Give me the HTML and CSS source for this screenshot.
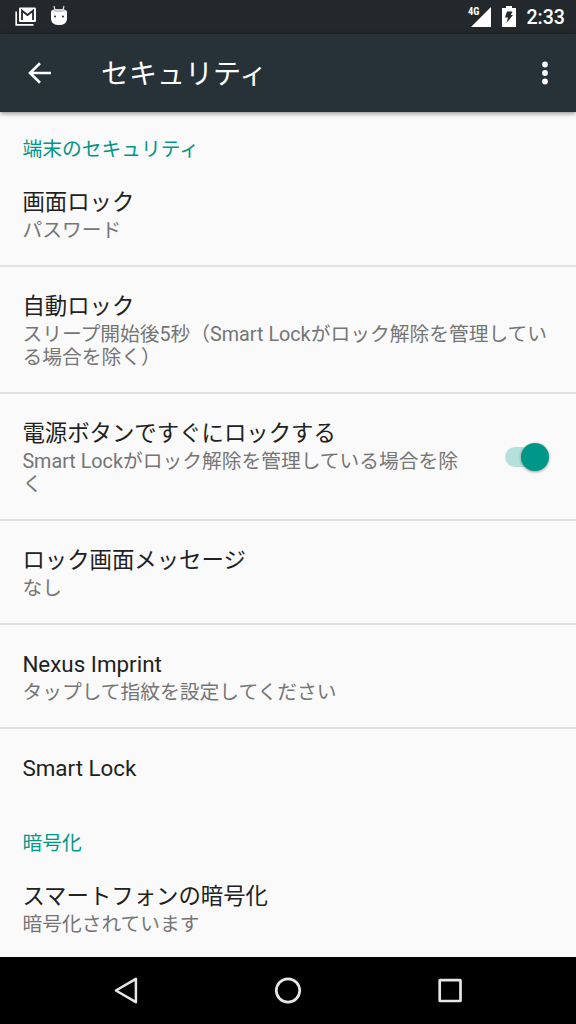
FILE: index.html
```html
<!DOCTYPE html>
<html lang="ja">
<head>
    <meta charset="UTF-8">
    <meta name="viewport" content="width=device-width, initial-scale=1.0">
    <title>セキュリティ</title>
    <link rel="stylesheet" href="styles.css">
</head>
<body>
    <div class="screen">
        <div class="status-bar">
            <svg class="icon-gmail" width="22" height="20" viewBox="0 0 22 20">
                <path d="M1.2 4.500V17.800H18.500" fill="none" stroke="#fff" stroke-width="1.7"/>
                <rect x="4" y="0.500" width="17" height="14.500" rx="1.2" fill="#fff"/>
                <path d="M7 13V3.700L12.500 8L18 3.700V13" fill="none" stroke="#22282b" stroke-width="1.8"/>
            </svg>
            <svg class="icon-android" width="18" height="21" viewBox="0 0 18 21">
                <path d="M4 1L5 5M14 1L13 5" stroke="#ddd" stroke-width="1.2"/>
                <path d="M1 7Q1 4 9 4T17 7V14Q16.500 20 9 20T1 14Z" fill="#fff"/>
                <path d="M2.500 6Q4 4 9 4T15.500 6Q9 8.500 2.500 6Z" fill="#ccc"/>
                <circle cx="5" cy="11.500" r="1" fill="#22282b"/>
                <circle cx="13" cy="11.500" r="1" fill="#22282b"/>
            </svg>
            <div class="status-right">
                <span class="network">4G</span>
                <svg class="icon-signal" width="20" height="20" viewBox="0 0 20 20">
                    <path d="M0 20L20 0V20Z" fill="#fff"/>
                </svg>
                <svg class="icon-battery" width="14" height="21" viewBox="0 0 14 21">
                    <path d="M4 0H10V2H14V21H0V2H4Z" fill="#fff"/>
                    <path d="M5 5.500H10.500L8.800 9H11L4.500 17L6 11.500H3Z" fill="#22282b"/>
                </svg>
                <span class="clock">2:33</span>
            </div>
        </div>

        <header class="toolbar">
            <svg class="icon-back" width="24" height="22" viewBox="0 0 24 22">
                <path d="M23 11H2M12 1.200L2 11L12 20.800" fill="none" stroke="#fff" stroke-width="2.6"/>
            </svg>
            <h1 class="toolbar-title">セキュリティ</h1>
            <svg class="icon-more" width="6" height="24" viewBox="0 0 6 24">
                <circle cx="3" cy="3.500" r="2.900" fill="#fff"/>
                <circle cx="3" cy="12" r="2.900" fill="#fff"/>
                <circle cx="3" cy="20.500" r="2.900" fill="#fff"/>
            </svg>
        </header>

        <main class="content">
            <h2 class="category">端末のセキュリティ</h2>
            <div class="row">
                <div class="row-text">
                    <div class="title">画面ロック</div>
                    <div class="summary">パスワード</div>
                </div>
            </div>
            <div class="row divided">
                <div class="row-text">
                    <div class="title">自動ロック</div>
                    <div class="summary">スリープ開始後5秒（Smart Lockがロック解除を管理している場合を除く）</div>
                </div>
            </div>
            <div class="row divided">
                <div class="row-text">
                    <div class="title">電源ボタンですぐにロックする</div>
                    <div class="summary">Smart Lockがロック解除を管理している場合を除く</div>
                </div>
                <div class="switch"><div class="thumb"></div></div>
            </div>
            <div class="row divided">
                <div class="row-text">
                    <div class="title">ロック画面メッセージ</div>
                    <div class="summary">なし</div>
                </div>
            </div>
            <div class="row divided">
                <div class="row-text">
                    <div class="title">Nexus Imprint</div>
                    <div class="summary">タップして指紋を設定してください</div>
                </div>
            </div>
            <div class="row divided">
                <div class="row-text">
                    <div class="title">Smart Lock</div>
                </div>
            </div>
            <h2 class="category">暗号化</h2>
            <div class="row">
                <div class="row-text">
                    <div class="title">スマートフォンの暗号化</div>
                    <div class="summary">暗号化されています</div>
                </div>
            </div>
        </main>

        <nav class="nav-bar">
            <svg width="30" height="30" viewBox="0 0 30 30">
                <path d="M4.900 14.500L24.900 2.800V26.200Z" fill="none" stroke="#e6e6e6" stroke-width="2.5" stroke-linejoin="round"/>
            </svg>
            <svg width="30" height="30" viewBox="0 0 30 30">
                <circle cx="15" cy="14.500" r="11.700" fill="none" stroke="#e6e6e6" stroke-width="2.700"/>
            </svg>
            <svg width="30" height="30" viewBox="0 0 30 30">
                <rect x="4.700" y="4.200" width="20.800" height="20.800" rx="0.500" fill="none" stroke="#e6e6e6" stroke-width="2.700" stroke-linejoin="round"/>
            </svg>
        </nav>
    </div>
</body>
</html>
```
FILE: styles.css
```css
body {
    margin: 0;
    background-color: #fafafa;
    font-family: Roboto, "Noto Sans CJK JP", sans-serif;
}

svg {
    display: block;
    flex-shrink: 0;
}

.screen {
    display: flex;
    flex-direction: column;
    width: 576px;
    height: 1024px;
    overflow: hidden;
}

/* Status Bar */
.status-bar {
    display: flex;
    align-items: flex-start;
    flex-shrink: 0;
    box-sizing: border-box;
    height: 34px;
    padding: 6px 11px 0 15px;
    background-color: #22282b;
    color: white;
}

.icon-gmail {
    margin-top: 1px;
}

.icon-android {
    margin-left: 13px;
    margin-top: -1px;
}

.status-right {
    display: flex;
    margin-left: auto;
}

.network {
    font-family: "Roboto Condensed", Roboto, sans-serif;
    font-size: 10.5px;
    font-weight: 700;
    line-height: 12px;
}

.icon-signal {
    margin: 1px 0 0 -8px;
}

.icon-battery {
    margin-left: 11px;
}

.clock {
    margin-left: 10px;
    font-size: 19.6px;
    font-weight: 500;
    line-height: 24px;
}

/* Toolbar */
.toolbar {
    display: flex;
    align-items: center;
    flex-shrink: 0;
    box-sizing: border-box;
    height: 78px;
    padding: 0 28px;
    background-color: #263238;
    color: white;
    box-shadow: 0 1px 5px rgba(0, 0, 0, 0.5);
    z-index: 1;
}

.toolbar-title {
    margin: 0 auto 0 49px;
    padding-top: 4px;
    font-size: 28px;
    font-weight: 400;
    line-height: 36px;
}

/* Settings List */
.content {
    flex: 1;
    overflow: hidden;
}

.category {
    box-sizing: border-box;
    height: 51px;
    margin: 0;
    padding: 25px 22.4px 0;
    color: #009688;
    font-size: 19.75px;
    font-weight: 400;
    line-height: 26px;
}

.row {
    display: flex;
    align-items: center;
    padding: 24px 22px 23px 22.4px;
}

.divided {
    border-top: 2px solid #e1e1e1;
}

.row-text {
    flex: 1;
}

.title {
    color: #212121;
    font-size: 22.4px;
    line-height: 30px;
}

.summary {
    margin-top: 2px;
    color: #757575;
    font-size: 19.75px;
    line-height: 23px;
}

/* Switch */
.switch {
    display: flex;
    align-items: center;
    justify-content: flex-end;
    width: 40px;
    height: 20px;
    margin: 0 9.5px 0 45.5px;
    border-radius: 10px;
    background-color: #b5e0dc;
}

.thumb {
    flex-shrink: 0;
    width: 28px;
    height: 28px;
    margin-right: -4px;
    border-radius: 50%;
    background-color: #009688;
    box-shadow: 0 1px 3px rgba(0, 0, 0, 0.4);
}

/* Navigation Bar */
.nav-bar {
    display: flex;
    align-items: center;
    justify-content: space-between;
    flex-shrink: 0;
    box-sizing: border-box;
    height: 67px;
    padding: 0 111px;
    background-color: black;
}
```
